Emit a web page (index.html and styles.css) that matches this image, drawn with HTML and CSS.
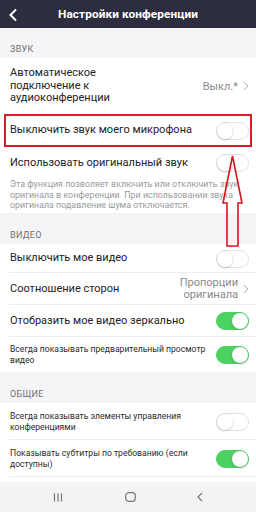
FILE: index.html
```html
<!DOCTYPE html>
<html lang="ru">
<head>
<meta charset="utf-8">
<link rel="stylesheet" href="styles.css">
</head>
<body>
<div class="screen">
  <header class="topbar">
    <svg class="back" width="10" height="14" viewBox="0 0 10 14"><path d="M8 1.5 L2.5 7 L8 12.5" fill="none" stroke="#fff" stroke-width="2"/></svg>
    <h1 class="title">Настройки конференции</h1>
  </header>

  <div class="section">ЗВУК</div>
  <div class="row tall">
    <div class="label">Автоматическое<br>подключение к<br>аудиоконференции</div>
    <div class="value">Выкл.*</div>
    <svg class="chev" width="6" height="10" viewBox="0 0 6 10"><path d="M1 1 L5 5 L1 9" fill="none" stroke="#aaa" stroke-width="1"/></svg>
  </div>
  <div class="row mute highlight">
    <div class="label">Выключить звук моего микрофона</div>
    <span class="toggle"></span>
  </div>
  <div class="row orig">
    <div class="label">Использовать оригинальный звук</div>
    <span class="toggle"></span>
  </div>
  <div class="desc">Эта функция позволяет включить или отключить звук оригинала в конференции. При использовании звука оригинала подавление шума отключается.</div>

  <div class="section">ВИДЕО</div>
  <div class="row r29 sep">
    <div class="label">Выключить мое видео</div>
    <span class="toggle"></span>
  </div>
  <div class="row r32 sep">
    <div class="label">Соотношение сторон</div>
    <div class="value right">Пропорции<br>оригинала</div>
    <svg class="chev" width="6" height="10" viewBox="0 0 6 10"><path d="M1 1 L5 5 L1 9" fill="none" stroke="#aaa" stroke-width="1"/></svg>
  </div>
  <div class="row r32 sep">
    <div class="label">Отобразить мое видео зеркально</div>
    <span class="toggle on"></span>
  </div>
  <div class="row r35">
    <div class="label small">Всегда показывать предварительный просмотр<br>видео</div>
    <span class="toggle on"></span>
  </div>

  <div class="section">ОБЩИЕ</div>
  <div class="row r37 sep">
    <div class="label small">Всегда показывать элементы управления<br>конференциями</div>
    <span class="toggle"></span>
  </div>
  <div class="row r37 sep">
    <div class="label small">Показывать субтитры по требованию (если<br>доступны)</div>
    <span class="toggle on"></span>
  </div>
  <div class="gap"></div>

  <nav class="navbar">
    <svg width="10" height="9" viewBox="0 0 10 9"><path d="M1.5 0.5 V8.5 M5 0.5 V8.5 M8.5 0.5 V8.5" stroke="#777" stroke-width="1.2"/></svg>
    <svg width="11" height="10" viewBox="0 0 11 10"><rect x="0.7" y="0.7" width="9.6" height="8.6" rx="3" fill="none" stroke="#777" stroke-width="1.2"/></svg>
    <svg width="6" height="10" viewBox="0 0 6 10"><path d="M5 1 L1 5 L5 9" fill="none" stroke="#777" stroke-width="1.2"/></svg>
  </nav>

  <svg class="arrow" width="30" height="100" viewBox="0 0 30 100"><path d="M12.5 1 L3 48 L7 48 L7 91 L18 91 L18 48 L22 48 Z" fill="none" stroke="#d7151f" stroke-width="1.6" stroke-linejoin="miter"/></svg>
</div>
</body>
</html>
```

FILE: styles.css
```css
* { box-sizing: border-box; }
html, body { margin: 0; padding: 0; }
body {
  width: 256px;
  height: 512px;
  overflow: hidden;
  font-family: Roboto, "Noto Sans", "Liberation Sans", sans-serif;
  background: #fff;
  color: #222;
}
.screen {
  position: relative;
  width: 256px;
  height: 512px;
  display: flex;
  flex-direction: column;
}
.topbar {
  height: 28px;
  background: #2c2d3e;
  display: flex;
  align-items: center;
  justify-content: center;
  position: relative;
  flex: none;
}
.back {
  position: absolute;
  left: 8px;
  top: 8px;
}
.title {
  margin: 0;
  font-size: 11.8px;
  font-weight: 700;
  color: #fff;
  letter-spacing: 0.1px;
}
.section {
  height: 31px;
  background: #f5f5f7;
  font-size: 9px;
  color: #6e6e6e;
  padding: 0 10px 4px;
  display: flex;
  align-items: flex-end;
  flex: none;
  letter-spacing: 0.3px;
}
.section:first-of-type { height: 30px; }
.row {
  display: flex;
  align-items: center;
  padding: 0 7px 0 10px;
  position: relative;
  flex: none;
  background: #fff;
}
.row.tall { height: 56px; }
.row.mute { height: 33px; }
.row.orig { height: 32px; }
.row.r29 { height: 29px; }
.row.r32 { height: 32px; }
.row.r35 { height: 35px; }
.row.r37 { height: 37px; }
.row.sep::after {
  content: "";
  position: absolute;
  left: 9px;
  right: 0;
  bottom: 0;
  height: 1px;
  background: #ececec;
}
.label {
  flex: 1;
  font-size: 11px;
  line-height: 12.5px;
  color: #222;
}
.label.small {
  font-size: 8.6px;
  line-height: 11px;
  color: #2a2a2a;
}
.value {
  font-size: 11px;
  color: #8a8a8a;
  margin-right: 5px;
}
.value.right {
  text-align: right;
  line-height: 12px;
}
.chev { flex: none; margin-right: 0; }
.highlight::before {
  content: "";
  position: absolute;
  left: 4px;
  right: 4px;
  top: 0;
  bottom: 0;
  border: 2px solid #d91c27;
  pointer-events: none;
}
.toggle {
  flex: none;
  width: 33px;
  height: 18px;
  border-radius: 9px;
  border: 1px solid #e3e3e3;
  background: #fff;
  position: relative;
  margin-right: 0;
}
.toggle::after {
  content: "";
  position: absolute;
  top: 0;
  left: 0;
  width: 16px;
  height: 16px;
  border-radius: 50%;
  background: #fff;
  box-shadow: 0 0.5px 2px rgba(0,0,0,0.28);
}
.toggle.on {
  background: #4cd263;
  border-color: #4cd263;
}
.toggle.on::after {
  left: auto;
  right: 0;
}
.desc {
  font-size: 8.9px;
  line-height: 10.5px;
  color: #9a9a9a;
  padding: 0 14px 2px 10px;
  height: 34px;
  flex: none;
}
.gap { height: 5px; flex: none; }
.navbar {
  flex: 1;
  background: #f3f3f3;
  display: flex;
  align-items: center;
  justify-content: space-between;
  padding: 0 53px;
}
.arrow {
  position: absolute;
  left: 220px;
  top: 155px;
}
```
